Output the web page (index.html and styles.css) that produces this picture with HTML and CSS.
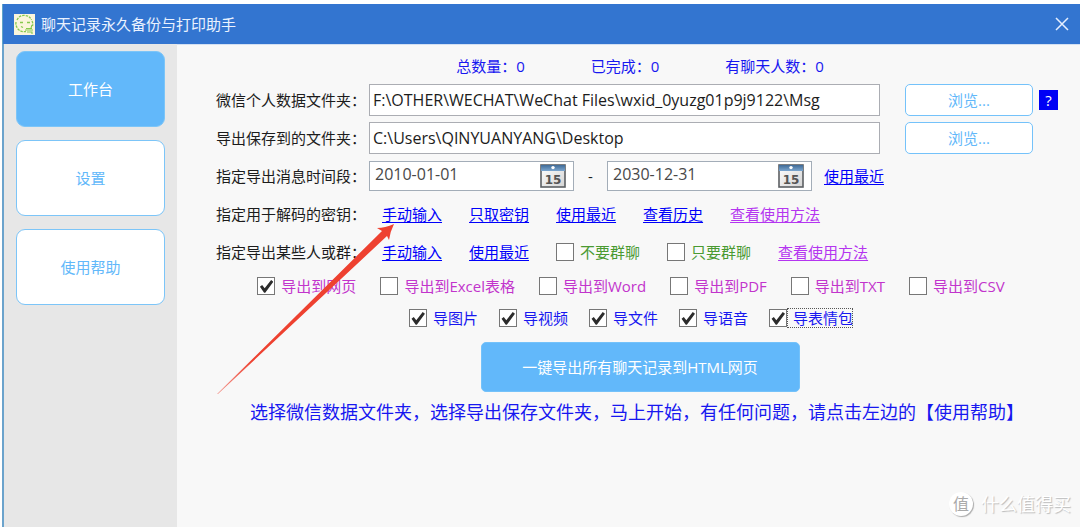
FILE: index.html
```
<!DOCTYPE html>
<html lang="zh-CN">
<head>
<meta charset="utf-8">
<title>聊天记录永久备份与打印助手</title>
<link rel="stylesheet" href="styles.css">
</head>
<body>
<svg class="defs" width="0" height="0" aria-hidden="true">
  <defs>
    <linearGradient id="cal-top" x1="0" y1="0" x2="0" y2="1">
      <stop offset="0" stop-color="#3f6a96"/><stop offset="1" stop-color="#7ba6cf"/>
    </linearGradient>
    <linearGradient id="cal-body" x1="0" y1="0" x2="1" y2="1">
      <stop offset="0" stop-color="#ffffff"/><stop offset="1" stop-color="#d4d4d4"/>
    </linearGradient>
    <symbol id="calendar" viewBox="0 0 26 24">
      <rect x="1" y="1" width="24" height="22" fill="url(#cal-body)" stroke="#5c5f63" stroke-width="1.6"/>
      <rect x="1" y="1" width="24" height="6" fill="url(#cal-top)"/>
      <circle cx="13" cy="3.6" r="1.7" fill="#fff"/>
      <text x="13" y="20" text-anchor="middle" class="cal-day">15</text>
    </symbol>
  </defs>
</svg>
<div class="window">
  <header class="titlebar">
    <svg class="logo" viewBox="0 0 21 21" aria-hidden="true">
      <rect width="21" height="21" fill="#fbf5dc"/>
      <g fill="none" stroke="#86c94c" stroke-width="1.3">
        <path d="M3 6C5 2 8 1 11 1.500C14 1.500 16 3 17.500 6M2 8C1.500 11 2.500 13 4 15C6 17.500 9 18 12 17.500M18 7C19 9 19 10 18.500 12" stroke-dasharray="2.500 1"/>
        <path d="M6 8.500H9M13 8.500H16M7 12.500L9 13.500"/>
        <path d="M12 14.500H18M11 16H19M13 18H18V20M18 11L17 14" stroke-width="1.1"/>
      </g>
    </svg>
    <h1 class="title">聊天记录永久备份与打印助手</h1>
    <button class="close" type="button" aria-label="关闭">
      <svg viewBox="0 0 14 14" aria-hidden="true"><path d="M1 1L13 13M13 1L1 13"/></svg>
    </button>
  </header>
  <div class="body">
    <nav class="sidebar">
      <button class="nav-button active" type="button">工作台</button>
      <button class="nav-button" type="button">设置</button>
      <button class="nav-button" type="button">使用帮助</button>
    </nav>
    <main class="panel">
      <div class="stats"><span>总数量：0</span><span>已完成：0</span><span>有聊天人数：0</span></div>
      <div class="form">
        <div class="row">
          <label class="label" for="source">微信个人数据文件夹：</label>
          <input class="path" id="source" type="text" value="F:\OTHER\WECHAT\WeChat Files\wxid_0yuzg01p9j9122\Msg">
          <div class="tools"><button class="browse" type="button">浏览...</button><button class="help" type="button">?</button></div>
        </div>
        <div class="row">
          <label class="label" for="target">导出保存到的文件夹：</label>
          <input class="path" id="target" type="text" value="C:\Users\QINYUANYANG\Desktop">
          <div class="tools"><button class="browse" type="button">浏览...</button></div>
        </div>
        <div class="row">
          <label class="label" for="from">指定导出消息时间段：</label>
          <div class="date"><input id="from" type="text" value="2010-01-01"><button type="button" aria-label="选择开始日期"><svg viewBox="0 0 26 24"><use href="#calendar"/></svg></button></div>
          <span class="dash">-</span>
          <div class="date"><input id="to" type="text" value="2030-12-31" aria-label="结束日期"><button type="button" aria-label="选择结束日期"><svg viewBox="0 0 26 24"><use href="#calendar"/></svg></button></div>
          <a class="recent" href="#">使用最近</a>
        </div>
        <div class="row">
          <span class="label">指定用于解码的密钥：</span>
          <div class="links"><a href="#">手动输入</a><a href="#">只取密钥</a><a href="#">使用最近</a><a href="#">查看历史</a><a class="guide" href="#">查看使用方法</a></div>
        </div>
        <div class="row">
          <span class="label">指定导出某些人或群：</span>
          <div class="links">
            <a href="#">手动输入</a><a href="#">使用最近</a>
            <label class="check green"><input type="checkbox"><span>不要群聊</span></label>
            <label class="check green"><input type="checkbox"><span>只要群聊</span></label>
            <a class="guide" href="#">查看使用方法</a>
          </div>
        </div>
      </div>
      <div class="checks formats">
        <label class="check"><input type="checkbox" checked><span>导出到网页</span></label>
        <label class="check"><input type="checkbox"><span>导出到Excel表格</span></label>
        <label class="check"><input type="checkbox"><span>导出到Word</span></label>
        <label class="check"><input type="checkbox"><span>导出到PDF</span></label>
        <label class="check"><input type="checkbox"><span>导出到TXT</span></label>
        <label class="check"><input type="checkbox"><span>导出到CSV</span></label>
      </div>
      <div class="checks media">
        <label class="check"><input type="checkbox" checked><span>导图片</span></label>
        <label class="check"><input type="checkbox" checked><span>导视频</span></label>
        <label class="check"><input type="checkbox" checked><span>导文件</span></label>
        <label class="check"><input type="checkbox" checked><span>导语音</span></label>
        <label class="check focused"><input type="checkbox" checked><span>导表情包</span></label>
      </div>
      <button class="export" type="button">一键导出所有聊天记录到HTML网页</button>
      <p class="note">选择微信数据文件夹，选择导出保存文件夹，马上开始，有任何问题，请点击左边的【使用帮助】</p>
      <svg class="arrow" viewBox="0 0 178 172" aria-hidden="true">
        <defs>
          <linearGradient id="fade" x1="0" y1="1" x2="1" y2="0">
            <stop offset="0" stop-color="#ee4130" stop-opacity="0.5"/><stop offset="0.2" stop-color="#ee4130"/>
          </linearGradient>
        </defs>
        <path fill="url(#fade)" d="M0 171L165 8L160 5Q168 5 177 1Q173 9 172 17L170 13L1 171Z"/>
      </svg>
      <div class="watermark"><span class="badge">值</span><span>什么值得买</span></div>
    </main>
  </div>
</div>
</body>
</html>
```
FILE: styles.css
```
* { box-sizing: border-box; }

body {
  margin: 0;
  background: #fff;
  color: #1c1c1c;
  font: 15px/20px "Open Sans", "Noto Sans CJK SC", sans-serif;
}

button, input { font: inherit; }
button { padding: 0; cursor: pointer; }
a { color: #0000fa; text-underline-offset: 2px; text-decoration-skip-ink: none; }
.defs { position: absolute; }

.window {
  display: flex;
  flex-direction: column;
  min-height: 100vh;
  padding: 4px 0 0 2px;
}

.titlebar {
  display: flex;
  align-items: center;
  gap: 6px;
  height: 40px;
  padding: 0 11px;
  background: #3375d0;
  border-left: 1px solid #5fa3c8;
  color: #eaf2ff;
}
.logo { width: 21px; height: 21px; }
.title { flex: 1; margin: 0; font-size: 15px; font-weight: 400; }
.close { display: flex; border: 0; background: none; }
.close svg { width: 14px; height: 14px; fill: none; stroke: #e6efff; stroke-width: 1.5; }

.body { display: flex; flex: 1; border-left: 2px solid #6ba3cc; }

.sidebar {
  display: flex;
  flex-direction: column;
  gap: 13px;
  width: 173px;
  padding: 7px 12px;
  background: #e7e7e7;
}
.nav-button {
  height: 76px;
  border: 1px solid #7cc5f8;
  border-radius: 9px;
  background: #fff;
  color: #62b8fa;
}
.nav-button.active { background: #62b8fa; color: #fff; }

.panel {
  position: relative;
  display: flex;
  flex: 1;
  flex-direction: column;
  align-items: center;
  padding: 11px 22px 0 39px;
  border-top: 1px solid #d3e0f2;
  background: #f8f8f8;
}

.stats { display: flex; gap: 66px; padding-left: 6px; color: #1717f0; }

.form { display: flex; flex-direction: column; gap: 6px; width: 100%; margin-top: 8px; }
.row { display: flex; align-items: center; height: 32px; }
.label { width: 153px; white-space: nowrap; }

.path {
  flex: 1;
  min-width: 0;
  height: 32px;
  padding: 0 3px;
  border: 1px solid #abadb3;
  background: #fff;
  color: #1c1c1c;
  font-size: 16px;
}
.tools { display: flex; align-items: center; gap: 6px; width: 178px; padding-left: 25px; }
.browse {
  width: 128px;
  height: 32px;
  border: 1px solid #74c2fa;
  border-radius: 5px;
  background: #fff;
  color: #62b8fa;
}
.help { width: 19px; height: 20px; border: 0; background: #0000f5; color: #fff; }

.date {
  display: flex;
  align-items: center;
  width: 205px;
  height: 30px;
  padding: 0 7px 0 5px;
  border: 1px solid #a3adb8;
  background: #fff;
}
.date input {
  flex: 1;
  min-width: 0;
  padding: 0 0 4px;
  border: 0;
  background: none;
  color: #484848;
  font-size: 16px;
}
.date button { display: flex; border: 0; background: none; }
.date svg { width: 26px; height: 24px; }
.cal-day { font: bold 12px "DejaVu Sans", sans-serif; fill: #555; }
.dash { width: 33px; text-align: center; }
.recent { margin-left: 12px; }

.links { display: flex; align-items: center; gap: 27px; padding-left: 13px; }
.guide { color: #b435f0; }

.check { display: flex; align-items: center; gap: 6px; white-space: nowrap; }
.check input {
  appearance: none;
  width: 18px;
  height: 18px;
  margin: 0;
  border: 1px solid #777;
  background: #fff;
}
.check input:checked::before {
  content: "";
  display: block;
  width: 14px;
  height: 14px;
  margin: 1px;
  background: #2c2c2c;
  clip-path: polygon(4% 55%, 20% 42%, 38% 66%, 84% 8%, 100% 20%, 42% 98%, 34% 98%);
}
.green { color: #4a9a32; }

.checks { display: flex; justify-content: center; height: 20px; padding-right: 12px; }
.formats { gap: 24px; margin-top: 8px; color: #c234cc; }
.media { gap: 21px; margin-top: 12px; color: #1717f0; }
.focused { gap: 0; }
.focused span { padding-left: 6px; outline: 1px dotted #555; outline-offset: -1px; }

.export {
  width: 319px;
  height: 50px;
  margin: 14px 0 0 6px;
  border: 1px solid #74c2fa;
  border-radius: 5px;
  background: #62b8fa;
  color: #fff;
}
.note { margin: 8px 0 0; color: #1717f0; font-size: 18px; line-height: 24px; white-space: nowrap; }

.arrow {
  position: absolute;
  top: 178px;
  left: 40px;
  width: 178px;
  height: 172px;
  pointer-events: none;
}

.watermark {
  position: absolute;
  right: 9px;
  bottom: 10px;
  display: flex;
  align-items: center;
  gap: 8px;
  color: #fff;
  font-size: 18px;
  line-height: 26px;
  text-shadow: 1px 1px 1px #bbb;
}
.badge {
  width: 24px;
  height: 24px;
  border-radius: 50%;
  background: #fff;
  box-shadow: 1px 1px 1px #aaa;
  color: #aaa;
  font-size: 16px;
  line-height: 24px;
  text-align: center;
  text-shadow: none;
}
```
